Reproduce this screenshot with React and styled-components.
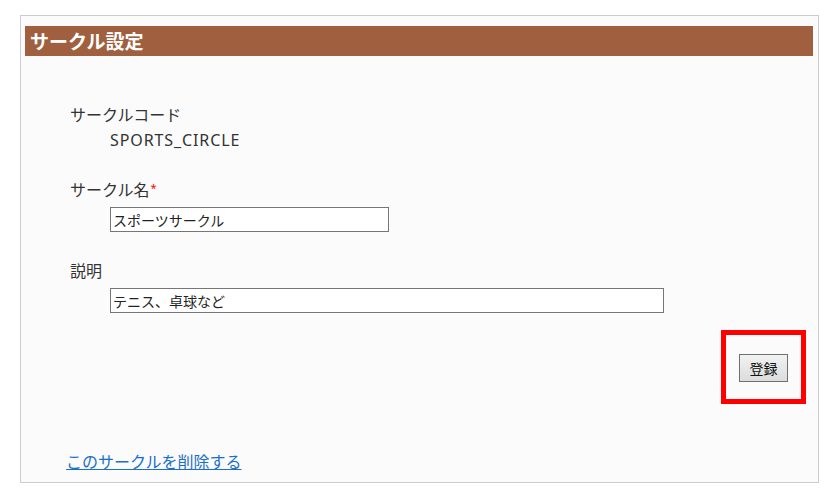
import React from 'react';
import styled, { createGlobalStyle } from 'styled-components';

const GlobalStyle = createGlobalStyle`
  html, body {
    margin: 0;
    padding: 0;
    background: #ffffff;
  }
  body {
    font-family: "Noto Sans", "Noto Sans CJK JP", sans-serif;
    color: #333333;
  }
`;

const Panel = styled.div`
  box-sizing: border-box;
  margin: 15px 0 0 20px;
  width: 799px;
  height: 468px;
  border: 1px solid #cccccc;
  background: #fbfbfb;
  padding: 10px 5px 0 4px;
  display: flex;
  flex-direction: column;
`;

const Header = styled.h2`
  margin: 0;
  height: 30px;
  background: #a0603f;
  color: #ffffff;
  font-family: "Noto Sans CJK JP", sans-serif;
  font-size: 19px;
  font-weight: 700;
  line-height: 30px;
  padding-left: 5px;
`;

const Form = styled.div`
  display: flex;
  flex-direction: column;
  padding-left: 45px;
  margin-top: 47px;
`;

const Label = styled.div`
  font-size: 16px;
  line-height: 24px;
  height: 24px;
  margin-top: ${p => p.$top || 0}px;
  color: #333333;
`;

const Required = styled.span`
  position: relative;
  top: -4px;
  color: #ff0000;
  font-size: 11px;
  line-height: 0;
  margin-left: 1px;
`;

const Value = styled.div`
  font-size: 16px;
  line-height: 24px;
  letter-spacing: 0.9px;
  margin: 1px 0 0 40px;
  color: #333333;
`;

const TextInput = styled.input`
  box-sizing: border-box;
  margin: 5px 0 0 40px;
  width: ${p => p.$width}px;
  height: 25px;
  border: 1px solid #767676;
  border-radius: 0;
  background: #ffffff;
  padding: 0 2px;
  font-family: "Noto Sans CJK JP", sans-serif;
  font-size: 14px;
  color: #222222;
  outline: none;
`;

const ButtonRow = styled.div`
  display: flex;
  justify-content: flex-end;
  margin: 17px 7px 0 0;
`;

const Highlight = styled.div`
  border: 5px solid #ff0000;
  padding: 19px 13px 17px 13px;
`;

const SubmitButton = styled.button`
  box-sizing: border-box;
  display: block;
  width: 49px;
  height: 28px;
  border: 1px solid #707070;
  border-radius: 0;
  background: linear-gradient(#f2f2f2, #dcdcdc);
  font-family: "Noto Sans CJK JP", sans-serif;
  font-size: 14px;
  color: #111111;
  padding: 0;
  cursor: pointer;
`;

const DeleteLink = styled.a`
  margin: 45px 0 0 41px;
  align-self: flex-start;
  font-family: "Noto Sans CJK JP", sans-serif;
  font-size: 16px;
  line-height: 24px;
  color: #1a6fc9;
  text-decoration: underline;
  cursor: pointer;
`;

export default function App() {
  return (
    <>
      <GlobalStyle />
      <Panel>
        <Header>サークル設定</Header>
        <Form>
          <Label>サークルコード</Label>
          <Value>SPORTS_CIRCLE</Value>
          <Label $top={26}>
            サークル名<Required>*</Required>
          </Label>
          <TextInput $width={279} defaultValue="スポーツサークル" />
          <Label $top={27}>説明</Label>
          <TextInput $width={554} defaultValue="テニス、卓球など" />
        </Form>
        <ButtonRow>
          <Highlight>
            <SubmitButton type="button">登録</SubmitButton>
          </Highlight>
        </ButtonRow>
        <DeleteLink href="#">このサークルを削除する</DeleteLink>
      </Panel>
    </>
  );
}
